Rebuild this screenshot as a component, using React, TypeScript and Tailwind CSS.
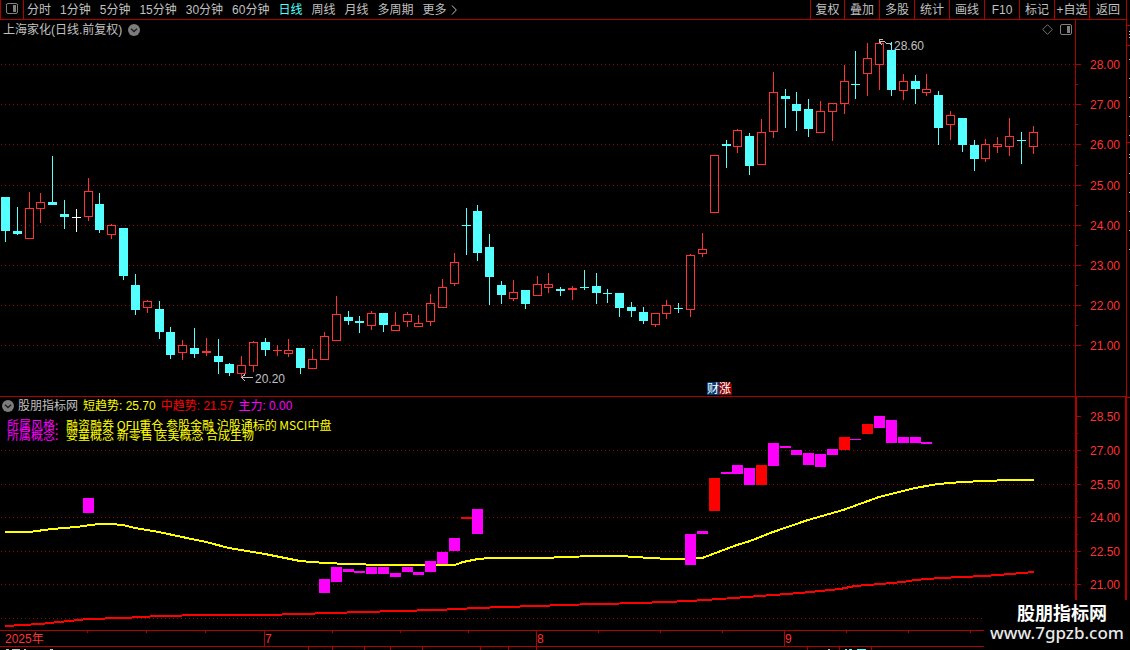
import { useState } from "react";

type Kind = "up" | "down" | "flat";
// x, body top, body bottom, wick top, wick bottom, kind
type Candle = [number, number, number, number, number, Kind];

const CANDLES: Candle[] = [
  [5, 197, 231, 197, 242, "down"],
  [17, 231, 234, 207, 235, "down"],
  [29, 208, 239, 192, 239, "up"],
  [40, 202, 209, 193, 223, "up"],
  [52, 202, 205, 156, 205, "down"],
  [64, 214, 217, 200, 229, "down"],
  [76, 217, 218, 209, 232, "flat"],
  [88, 191, 217, 178, 221, "up"],
  [99, 204, 230, 193, 233, "down"],
  [111, 225, 235, 224, 239, "up"],
  [123, 228, 276, 228, 280, "down"],
  [135, 285, 310, 274, 315, "down"],
  [147, 301, 308, 300, 313, "up"],
  [159, 309, 332, 301, 339, "down"],
  [170, 332, 355, 327, 359, "down"],
  [182, 345, 353, 340, 360, "up"],
  [194, 348, 354, 328, 358, "down"],
  [206, 351, 353, 338, 356, "up"],
  [218, 356, 362, 339, 374, "down"],
  [229, 364, 373, 363, 376, "down"],
  [241, 365, 374, 356, 377, "up"],
  [253, 342, 366, 341, 372, "up"],
  [265, 342, 350, 338, 356, "down"],
  [277, 350, 351, 345, 356, "up"],
  [288, 350, 354, 339, 357, "up"],
  [300, 348, 368, 348, 374, "down"],
  [312, 359, 369, 349, 369, "up"],
  [324, 336, 360, 332, 360, "up"],
  [336, 314, 341, 296, 341, "up"],
  [348, 317, 321, 311, 325, "down"],
  [359, 321, 323, 316, 333, "down"],
  [371, 313, 326, 311, 330, "up"],
  [383, 313, 325, 313, 332, "down"],
  [395, 325, 331, 312, 331, "up"],
  [407, 314, 322, 312, 327, "up"],
  [418, 323, 327, 315, 327, "up"],
  [430, 303, 322, 294, 326, "up"],
  [442, 287, 308, 279, 308, "up"],
  [454, 262, 284, 253, 286, "up"],
  [466, 225, 226, 208, 255, "down"],
  [477, 211, 253, 205, 261, "down"],
  [489, 247, 277, 234, 305, "down"],
  [501, 285, 295, 281, 304, "down"],
  [513, 292, 299, 280, 301, "up"],
  [525, 290, 304, 290, 309, "down"],
  [537, 284, 296, 276, 296, "up"],
  [548, 284, 288, 273, 293, "up"],
  [560, 289, 291, 287, 296, "down"],
  [572, 288, 290, 286, 300, "up"],
  [584, 287, 288, 270, 290, "down"],
  [596, 286, 293, 273, 304, "down"],
  [607, 293, 294, 289, 303, "down"],
  [619, 293, 308, 293, 317, "down"],
  [631, 307, 311, 302, 317, "down"],
  [643, 312, 321, 307, 324, "down"],
  [655, 313, 325, 313, 327, "up"],
  [666, 305, 314, 300, 319, "up"],
  [678, 308, 309, 303, 313, "down"],
  [690, 255, 310, 254, 317, "up"],
  [702, 249, 254, 233, 257, "up"],
  [714, 155, 213, 155, 213, "up"],
  [726, 144, 146, 140, 168, "down"],
  [737, 130, 147, 129, 153, "up"],
  [749, 136, 166, 133, 175, "down"],
  [761, 132, 165, 119, 165, "up"],
  [773, 92, 132, 72, 138, "up"],
  [785, 96, 99, 89, 128, "down"],
  [796, 104, 111, 92, 131, "down"],
  [808, 109, 129, 99, 137, "down"],
  [820, 111, 133, 101, 133, "up"],
  [832, 103, 112, 103, 141, "up"],
  [844, 81, 104, 65, 114, "up"],
  [855, 84, 85, 51, 99, "down"],
  [867, 58, 74, 43, 96, "up"],
  [879, 43, 65, 43, 90, "up"],
  [891, 50, 90, 42, 96, "down"],
  [903, 81, 91, 74, 100, "up"],
  [915, 81, 89, 75, 104, "down"],
  [926, 89, 93, 74, 96, "up"],
  [938, 95, 128, 91, 145, "down"],
  [950, 115, 125, 111, 140, "up"],
  [962, 118, 145, 118, 152, "down"],
  [974, 145, 159, 140, 171, "down"],
  [985, 144, 159, 139, 162, "up"],
  [997, 144, 147, 137, 153, "up"],
  [1009, 136, 147, 118, 156, "up"],
  [1021, 140, 141, 132, 164, "down"],
  [1033, 132, 147, 126, 154, "up"],
];

// x, top, bottom, strong
const BARS: [number, number, number, boolean?][] = [
  [83, 498, 513],
  [319, 579, 593],
  [331, 567, 582],
  [343, 569, 572],
  [354, 571, 573],
  [366, 567, 574],
  [378, 567, 574],
  [390, 573, 577],
  [402, 567, 572],
  [413, 572, 575],
  [425, 561, 572],
  [437, 552, 564],
  [449, 538, 551],
  [461, 517, 519, true],
  [472, 509, 534],
  [685, 534, 565],
  [697, 531, 534],
  [709, 478, 511, true],
  [721, 472, 474],
  [732, 465, 474],
  [744, 468, 485],
  [756, 465, 485, true],
  [768, 443, 466],
  [780, 446, 448],
  [791, 450, 455],
  [803, 453, 465],
  [815, 454, 467],
  [827, 449, 455],
  [839, 437, 450, true],
  [850, 439, 440],
  [862, 424, 434, true],
  [874, 416, 428],
  [886, 420, 443],
  [898, 437, 443],
  [910, 437, 443],
  [921, 442, 444],
];

const SHORT_TREND =
  "5,532 29,532 52,529 76,527 99,524 111,524 123,525 135,528 159,532 182,537 206,542 229,548 265,554 300,561 312,562 325,563 349,564 383,565 455,565 463,562 478,559 490,558 548,558 560,557 600,556 620,556 650,558 670,559 690,559 702,558 737,545 750,541 773,532 808,520 843,510 868,501 879,497 903,491 915,488 938,484 962,482 985,481 1009,480 1034,480";
const MID_TREND =
  "5,626 40,624 88,619 123,618 159,616 206,615 265,615 300,614 330,613 365,612 395,611 440,610 455,609 480,608 500,607 540,606 560,605 600,604 640,603 690,601 720,599 773,595 800,593 840,589 855,586 880,584 903,582 915,580 940,578 962,577 985,576 1010,574 1034,572";

const PRICE_TICKS: [string, number][] = [
  ["28.00", 64],
  ["27.00", 104],
  ["26.00", 144],
  ["25.00", 185],
  ["24.00", 225],
  ["23.00", 265],
  ["22.00", 305],
  ["21.00", 345],
];
const PRICE_MINOR = [84, 124, 165, 205, 245, 285, 325];

const TREND_TICKS: [string, number][] = [
  ["28.50", 416],
  ["27.00", 450],
  ["25.50", 484],
  ["24.00", 517],
  ["22.50", 551],
  ["21.00", 584],
];
const TREND_GRID = [450, 484, 517, 551, 584, 618];
const TREND_MINOR = [433, 467, 501, 534, 568, 601];

const PERIODS = [
  "分时",
  "1分钟",
  "5分钟",
  "15分钟",
  "30分钟",
  "60分钟",
  "日线",
  "周线",
  "月线",
  "多周期",
];
const TOOLS = ["复权", "叠加", "多股", "统计", "画线", "F10", "标记", "+自选", "返回"];

const COLORS: Record<Kind, string> = {
  up: "#ff3232",
  down: "#54ffff",
  flat: "#ffffff",
};

function PanelIcon() {
  return (
    <svg className="h-[11px] w-3" viewBox="0 0 12 11" fill="none">
      <rect x="0.5" y="0.5" width="11" height="10" rx="1.5" stroke="#808080" />
      <rect x="7" y="2" width="3" height="7" fill="#808080" />
    </svg>
  );
}

function ChevronBadge() {
  return (
    <svg className="size-3" viewBox="0 0 12 12" fill="none">
      <circle cx="6" cy="6" r="6" fill="#7c7c7c" />
      <path d="M3 4.8L6 7.6L9 4.8" stroke="#1c1c1c" strokeWidth="1.3" />
    </svg>
  );
}

function Grid({ rows }: { rows: number[] }) {
  return (
    <>
      {rows.map((y) => (
        <line
          key={y}
          x1="1"
          x2="1075"
          y1={y + 0.5}
          y2={y + 0.5}
          stroke="#8e0a0a"
          strokeDasharray="1 3"
        />
      ))}
    </>
  );
}

function Axis({ ticks, minor }: { ticks: [string, number][]; minor: number[] }) {
  return (
    <>
      {minor.map((y) => (
        <rect key={y} x="1076" y={y} width="2" height="1" fill="#b00000" />
      ))}
      {ticks.map(([label, y]) => (
        <g key={label}>
          <rect x="1076" y={y} width="5" height="1" fill="#b00000" />
          <text x="1090" y={y + 5} fill="#ff3232">
            {label}
          </text>
        </g>
      ))}
    </>
  );
}

function CandleShape({ candle }: { candle: Candle }) {
  const [x, top, bottom, high, low, kind] = candle;
  const color = COLORS[kind];
  const hollow = kind === "up" && bottom - top > 2;
  return (
    <g fill={color}>
      {high < top && <rect x={x} y={high} width="1" height={top - high} />}
      {low > bottom && <rect x={x} y={bottom} width="1" height={low - bottom} />}
      {hollow ? (
        <rect
          x={x - 3.5}
          y={top + 0.5}
          width="8"
          height={bottom - top - 1}
          fill="none"
          stroke={color}
        />
      ) : (
        <rect x={x - 4} y={top} width="9" height={bottom - top} />
      )}
    </g>
  );
}

function PriceChart() {
  return (
    <svg
      className="block h-auto w-full text-xs"
      viewBox="0 20 1126 376"
      shapeRendering="crispEdges"
      role="img"
      aria-label="上海家化 日线"
    >
      <Grid rows={PRICE_TICKS.map(([, y]) => y)} />
      <rect x="1075" y="20" width="1" height="376" fill="#b00000" />
      <Axis ticks={PRICE_TICKS} minor={PRICE_MINOR} />
      {CANDLES.map((c) => (
        <CandleShape key={c[0]} candle={c} />
      ))}
      <g fill="none" stroke="#c0c0c0">
        <path d="M883 39.5H880L879.5 42L882 45M880 41.5H884L887 43.5H890L892 45" />
        <path d="M253 377.5H241M245 374.5L241.5 377.5L245 381" />
      </g>
      <g fill="#c0c0c0">
        <text x="894" y="50">
          28.60
        </text>
        <text x="255" y="383">
          20.20
        </text>
      </g>
      <rect x="707" y="382" width="12" height="13" fill="#003c74" />
      <path d="M719 382H729L732 385V395H719Z" fill="#8c0000" />
      <text x="707" y="393" fill="#ffffff">
        财涨
      </text>
    </svg>
  );
}

function TrendChart() {
  return (
    <svg
      className="block h-auto w-full text-xs"
      viewBox="0 397 1126 233"
      shapeRendering="crispEdges"
      role="img"
      aria-label="股朋指标网"
    >
      <Grid rows={TREND_GRID} />
      <rect x="1075" y="397" width="2" height="233" fill="#b00000" />
      <rect x="1125" y="397" width="1" height="233" fill="#b00000" />
      <Axis ticks={TREND_TICKS} minor={TREND_MINOR} />
      <g fill="none" strokeWidth="2">
        <polyline points={SHORT_TREND} stroke="#ffff00" />
        <polyline points={MID_TREND} stroke="#ff0000" />
      </g>
      {BARS.map(([x, top, bottom, strong]) => (
        <rect
          key={x}
          x={x}
          y={top}
          width="11"
          height={bottom - top}
          fill={strong ? "#ff0000" : "#ff00ff"}
        />
      ))}
    </svg>
  );
}

function TimeAxis() {
  const minor = [87, 146, 205, 332, 400, 468, 598, 660, 722, 846, 908, 970];
  const months: [string, number][] = [
    ["7", 264],
    ["8", 536],
    ["9", 784],
  ];
  const lower = [308, 332, 364, 390, 422, 480, 508, 536, 807, 839, 871];
  return (
    <svg
      className="block h-auto w-full overflow-visible text-xs"
      viewBox="0 631 1126 19"
      shapeRendering="crispEdges"
    >
      <g fill="#b00000">
        {minor.map((x) => (
          <rect key={x} x={x} y="631" width="1" height="2" />
        ))}
        {months.map(([, x]) => (
          <rect key={x} x={x} y="631" width="1" height="15" />
        ))}
        <rect x="0" y="646" width="1126" height="1" />
        {lower.map((x) => (
          <rect key={x} x={x} y="647" width="1" height="3" />
        ))}
      </g>
      <g fill="#ff3232">
        <text x="5" y="643">
          2025年
        </text>
        {months.map(([label, x]) => (
          <text key={label} x={x + 1} y="643">
            {label}
          </text>
        ))}
      </g>
      <g fill="#c0c0c0">
        <path d="M6 649h3v1h-3zM12 649h8v1h-8zM24 649h2v1h-2zM50 649h3v1h-3zM828 649h2v1h-2z" />
        <path d="M845 649h2v1h-2zM849 649h3v1h-3zM857 649h9v1h-9z" fill="#54ffff" />
      </g>
    </svg>
  );
}

// Sliver of the neighbouring quote panel.
function SideEdge() {
  const rows = [31, 34, 37, 59, 78, 97, 116, 135, 154, 157, 173, 192, 211, 230, 249];
  return (
    <svg className="block h-full w-[3px]" shapeRendering="crispEdges">
      <g fill="#b00000">
        <rect y="25" width="3" height="1" />
        <rect y="45" width="3" height="1" />
        <rect y="142" width="3" height="1" />
        <rect y="397" width="3" height="1" />
      </g>
      {rows.map((y) => (
        <rect key={y} x="2" y={y} width="1" height="1" fill="#c0c0c0" />
      ))}
    </svg>
  );
}

export default function App() {
  const [period, setPeriod] = useState("日线");

  return (
    <div className="flex min-h-screen w-full overflow-hidden bg-black font-['Liberation_Sans','Noto_Sans_CJK_SC',sans-serif] text-xs text-[#c0c0c0]">
      <main className="min-w-0 flex-1">
        <header className="flex h-5 justify-between border-b border-[#b00000] whitespace-nowrap">
          <div className="flex">
            <button
              type="button"
              aria-label="侧栏"
              className="flex w-6 items-start justify-center border-x border-[#b00000] pt-[3px]"
            >
              <PanelIcon />
            </button>
            <nav className="ml-[3px] flex items-center gap-[9px]">
              {PERIODS.map((p) => (
                <button
                  key={p}
                  type="button"
                  onClick={() => setPeriod(p)}
                  className={p === period ? "text-[#54ffff]" : "hover:text-white"}
                >
                  {p}
                </button>
              ))}
              <button type="button" className="flex items-center gap-1">
                更多
                <svg className="h-2.5 w-1.5" viewBox="0 0 6 10" fill="none">
                  <path d="M1 0.5L5.3 5L1 9.5" stroke="#c0c0c0" />
                </svg>
              </button>
            </nav>
          </div>
          <div className="flex">
            {TOOLS.map((t) => (
              <button
                key={t}
                type="button"
                className="w-[35px] border-l border-[#b00000] first:w-[34px] last:w-[37px] hover:text-white"
              >
                {t}
              </button>
            ))}
          </div>
        </header>

        <section className="relative border-b border-[#b00000]">
          <PriceChart />
          <div className="absolute inset-x-0 top-0 flex h-[19px] items-center justify-between pr-[54px] pl-[3px]">
            <div className="flex items-center gap-1.5">
              <h1>上海家化(日线.前复权)</h1>
              <button type="button" aria-label="展开">
                <ChevronBadge />
              </button>
            </div>
            <div className="flex items-center gap-[7px]">
              <button type="button" aria-label="标注">
                <svg className="size-[11px]" viewBox="0 0 11 11" fill="none">
                  <path d="M5.5 0.7L10.3 5.5L5.5 10.3L0.7 5.5Z" stroke="#707070" />
                </svg>
              </button>
              <button type="button" aria-label="面板">
                <PanelIcon />
              </button>
            </div>
          </div>
        </section>

        <section className="relative border-b border-[#b00000]">
          <TrendChart />
          <div className="absolute top-0 left-0.5 whitespace-nowrap">
            <div className="flex h-[17px] items-center gap-[5px]">
              <div className="flex items-center gap-1">
                <button type="button" aria-label="展开指标">
                  <ChevronBadge />
                </button>
                <h2>股朋指标网</h2>
              </div>
              <span className="text-[#ffff00]">短趋势: 25.70</span>
              <span className="text-[#ff0000]">中趋势: 21.57</span>
              <span className="text-[#ff00ff]">主力: 0.00</span>
            </div>
            <dl className="mt-1.5 ml-[5px] grid grid-cols-[59px_auto] font-['Noto_Sans_CJK_SC',sans-serif] leading-[10px]">
              <dt className="text-[#ff00ff]">所属风格:</dt>
              <dd className="text-[#ffff00]">融资融券 QFII重仓 参股金融 沪股通标的 MSCI中盘</dd>
              <dt className="text-[#ff00ff]">所属概念:</dt>
              <dd className="text-[#ffff00]">婴童概念 新零售 医美概念 合成生物</dd>
            </dl>
          </div>
        </section>

        <TimeAxis />
      </main>

      <aside className="border-l border-[#b00000]">
        <SideEdge />
      </aside>

      <div className="absolute right-0 bottom-0 flex h-[50px] w-[146px] flex-col items-center bg-black pt-1 text-white">
        <span className="pl-2.5 text-lg leading-5 font-bold">股朋指标网</span>
        <span className="font-['Noto_Sans',sans-serif] text-[17px] leading-[18px] font-medium text-[#e8e8e8]">
          www.7gpzb.com
        </span>
      </div>
    </div>
  );
}
